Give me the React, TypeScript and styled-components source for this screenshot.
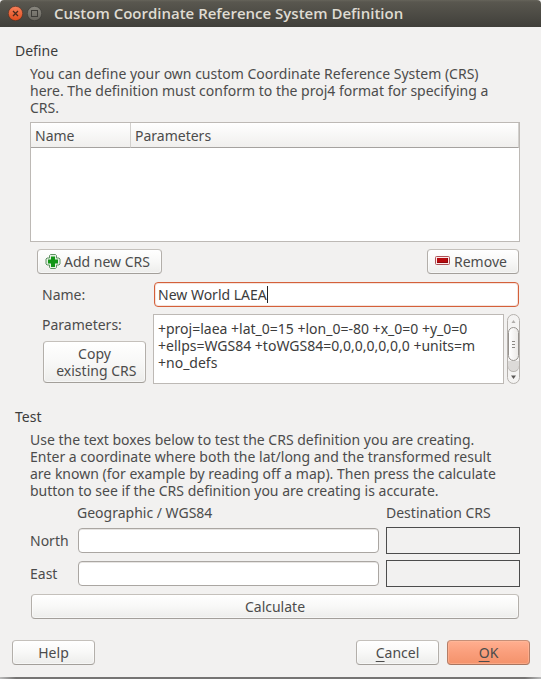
import React, { useState } from "react";
import styled, { createGlobalStyle, css } from "styled-components";

const GlobalStyle = createGlobalStyle`
  * { box-sizing: border-box; }
  body {
    margin: 0;
    background: #f2f1f0;
    color: #4c4c4c;
    font: 14px/17px "Noto Sans", "Open Sans", sans-serif;
  }
  button, input, textarea { font: inherit; color: inherit; }
`;

const Dialog = styled.form`
  display: flex;
  flex-direction: column;
  min-height: 100vh;
`;

const TitleBar = styled.header`
  display: flex;
  align-items: center;
  gap: 4px;
  height: 27px;
  padding: 0 8px;
  background: linear-gradient(#66645a 0, #59574f 2px, #403f3a 100%);
  border-radius: 4px 4px 0 0;
`;

const Title = styled.h1`
  margin: 0 0 0 8px;
  color: #dfdbd2;
  font-family: "Open Sans", "Noto Sans", sans-serif;
  font-size: 15px;
  font-weight: 600;
  line-height: 17px;
  white-space: nowrap;
`;

const WindowButton = styled.button`
  width: 15px;
  height: 15px;
  padding: 0;
  border: 0;
  background: none;
  line-height: 0;
`;

const Content = styled.main`
  flex: 1;
  padding: 15px 21px 0 15px;
`;

const Section = styled.section`
  & + & { margin-top: 24px; }
`;

const SectionTitle = styled.h2`
  margin: 0 0 6px;
  color: #3c3c3c;
  font-size: 14px;
  font-weight: 400;
  line-height: 17px;
`;

const SectionBody = styled.div`
  display: flex;
  flex-direction: column;
  gap: 6px;
  margin-left: 15px;
`;

const Description = styled.p`
  margin: 0;
  white-space: nowrap;
`;

const ListFrame = styled.div`
  height: 120px;
  border: 1px solid #bdb9b5;
  background: #fff;
`;

const CrsTable = styled.table`
  width: 100%;
  border-collapse: separate;
  border-spacing: 0;
  table-layout: fixed;
`;

const HeaderCell = styled.th<{ $width?: number }>`
  width: ${(p) => (p.$width ? `${p.$width}px` : "auto")};
  height: 25px;
  padding: 0 4px;
  border-right: 1px solid #d2d0cd;
  border-bottom: 1px solid #a5a29f;
  background: linear-gradient(#fff, #f0efed);
  font-weight: 400;
  text-align: left;
`;

const SpreadRow = styled.div<{ $indent?: number }>`
  display: flex;
  justify-content: space-between;
  padding-left: ${(p) => p.$indent ?? 0}px;
`;

const Button = styled.button<{ $primary?: boolean; $minWidth?: number }>`
  display: flex;
  align-items: center;
  justify-content: center;
  gap: 3px;
  min-width: ${(p) => p.$minWidth ?? 0}px;
  min-height: 25px;
  margin: 1px;
  padding: 3px 7px;
  border: 1px solid;
  border-color: #c4c0bb #b3afaa #a39f9a;
  border-radius: 4px;
  background: linear-gradient(#fff, #f8f8f7 50%, #ededeb);
  box-shadow: inset 0 0 0 1px rgba(255, 255, 255, 0.5);
  ${(p) =>
    p.$primary &&
    css`
      border-color: #c68f78 #b57d66 #a87560;
      background: linear-gradient(#ffaf90, #fa9e7b 50%, #f4926b);
      box-shadow: inset 0 0 0 1px rgba(255, 190, 160, 0.5);
    `}
`;

const IconButton = styled(Button)`
  justify-content: flex-start;
`;

const Mnemonic = styled.span`
  text-decoration: underline;
  text-decoration-skip-ink: none;
  text-underline-offset: 3px;
`;

const DefinitionGrid = styled.div`
  display: grid;
  grid-template-columns: 105px 1fr;
  gap: 6px;
  padding-left: 12px;
`;

const FieldLabel = styled.label`
  align-self: center;
`;

const SideColumn = styled.div`
  display: flex;
  flex-direction: column;
  justify-content: space-between;
  padding-top: 2px;
`;

const CopyButton = styled(Button)`
  min-height: 42px;
  line-height: 17px;
`;

const FocusedField = styled.div`
  display: flex;
  align-items: center;
  height: 25px;
  margin: 1px;
  padding-left: 3px;
  border: 1px solid #d4603a;
  border-radius: 4px;
  background: #fff;
  box-shadow: inset 0 0 0 1px #f6e3dc;
  color: #3c3c3c;
`;

const NameInput = styled.input`
  field-sizing: content;
  min-width: 1px;
  max-width: 100%;
  padding: 0;
  border: 0;
  outline: 0;
  background: none;
  caret-color: transparent;
`;

const Caret = styled.span`
  width: 1px;
  height: 17px;
  background: #222;
`;

const ParameterArea = styled.div`
  display: flex;
  gap: 3px;
  height: 70px;
`;

const ParameterText = styled.textarea`
  flex: 1;
  min-width: 0;
  padding: 5px 4px;
  border: 1px solid #bdb9b5;
  outline: 0;
  background: #fff;
  color: #3c3c3c;
  overflow: hidden;
  resize: none;
  white-space: pre;
`;

const ScrollTrack = styled.div`
  display: flex;
  flex-direction: column;
  width: 13px;
  border: 1px solid #b5b1ad;
  border-radius: 7px;
  background: #f4f3f2;
  overflow: hidden;
`;

const ScrollStep = styled.button`
  height: 12px;
  padding: 0;
  border: 0;
  background: none;
  line-height: 0;
`;

const ScrollTrough = styled.div`
  flex: 1;
  border-radius: 0 0 6px 6px;
  background: #dcdad8;
  box-shadow: 0 1px 0 #b5b1ad;
`;

const ScrollThumb = styled.div`
  display: flex;
  flex-direction: column;
  align-items: center;
  justify-content: center;
  gap: 2px;
  height: 34px;
  border: 1px solid #96928e;
  border-radius: 6px;
  background: linear-gradient(90deg, #fff, #eceae8);
`;

const Grip = styled.span`
  width: 3px;
  height: 1px;
  background: #8b8884;
`;

const TestGrid = styled.div`
  display: grid;
  grid-template-columns: 41px 1fr 134px;
  gap: 6px;
  align-items: center;
`;

const ColumnLabel = styled.span<{ $first?: boolean }>`
  grid-column: ${(p) => (p.$first ? 2 : "auto")};
  line-height: 16px;
`;

const CoordinateInput = styled.input`
  min-width: 0;
  height: 25px;
  margin: 1px;
  padding: 0 4px;
  border: 1px solid #aaa6a2;
  border-radius: 4px;
  outline: 0;
  background: #fff;
  box-shadow: inset 0 1px 0 #e7e5e3;
`;

const ResultBox = styled.output`
  height: 27px;
  border: 1px solid #4c4c4c;
`;

const Footer = styled.footer`
  display: flex;
  justify-content: space-between;
  margin-top: 19px;
  padding: 0 10px 11px 11px;
`;

const FooterGroup = styled.div`
  display: flex;
  gap: 6px;
`;

const BottomEdge = styled.div`
  height: 2px;
  background: linear-gradient(90deg, #bbb, #757473 16px calc(100% - 16px), #bbb);
`;

const CloseIcon = () => (
  <svg width="15" height="15" viewBox="0 0 15 15">
    <defs>
      <linearGradient id="close" x2="0" y2="1">
        <stop stopColor="#f7815b" />
        <stop offset="1" stopColor="#de4b1c" />
      </linearGradient>
    </defs>
    <circle cx="7.5" cy="7.5" r="7.2" fill="url(#close)" stroke="#4b2d21" strokeWidth=".6" />
    <path d="M5 5l5 5M10 5L5 10" stroke="#4a2a1c" strokeWidth="1.3" />
  </svg>
);

const MaximizeIcon = () => (
  <svg width="15" height="15" viewBox="0 0 15 15">
    <defs>
      <linearGradient id="max" x2="0" y2="1">
        <stop stopColor="#8a8880" />
        <stop offset="1" stopColor="#66645d" />
      </linearGradient>
    </defs>
    <circle cx="7.5" cy="7.5" r="7.2" fill="url(#max)" stroke="#383733" strokeWidth=".6" />
    <rect x="4.5" y="4.5" width="6" height="6" fill="none" stroke="#3d3c38" />
  </svg>
);

const PlusIcon = () => (
  <svg width="16" height="16" viewBox="0 0 16 16">
    <path
      d="M5.500 0.500h5l1 1v2.500h2.500l1 1v5l-1 1h-2.500v2.500l-1 1h-5l-1-1v-2.500h-2.500l-1-1v-5l1-1h2.500v-2.500z"
      fill="#e4f1e3"
      stroke="#5f9262"
    />
    <path d="M6 2.500h4v3h3v4h-3v3.500H6v-3.500H3v-4h3z" fill="#119516" />
  </svg>
);

const MinusIcon = () => (
  <svg width="16" height="16" viewBox="0 0 16 16">
    <rect x="0.500" y="2.500" width="14" height="8" rx="1" fill="#fbeaea" stroke="#ae5358" />
    <rect x="2" y="4" width="11" height="5" fill="#b80a0e" />
    <path d="M2 8.500h11M12.500 4v5" stroke="#8e070a" />
  </svg>
);

const Arrow = ({ down = false }: { down?: boolean }) => (
  <svg width="11" height="12" viewBox="0 0 11 12">
    {down ? (
      <path d="M3 4.500h5L5.500 8z" fill="#5b5856" />
    ) : (
      <path d="M3.500 8h4l-2-3z" fill="#b0adaa" />
    )}
  </svg>
);

export default function App() {
  const [name, setName] = useState("New World LAEA");
  const [params, setParams] = useState(
    "+proj=laea +lat_0=15 +lon_0=-80 +x_0=0 +y_0=0\n+ellps=WGS84 +toWGS84=0,0,0,0,0,0,0 +units=m\n+no_defs"
  );

  return (
    <>
      <GlobalStyle />
      <Dialog onSubmit={(e) => e.preventDefault()}>
        <TitleBar>
          <WindowButton type="button" aria-label="Close"><CloseIcon /></WindowButton>
          <WindowButton type="button" aria-label="Maximize"><MaximizeIcon /></WindowButton>
          <Title>Custom Coordinate Reference System Definition</Title>
        </TitleBar>
        <Content>
          <Section>
            <SectionTitle>Define</SectionTitle>
            <SectionBody>
              <Description>
                You can define your own custom Coordinate Reference System (CRS)<br />
                here. The definition must conform to the proj4 format for specifying a<br />
                CRS.
              </Description>
              <ListFrame>
                <CrsTable>
                  <thead>
                    <tr>
                      <HeaderCell $width={100}>Name</HeaderCell>
                      <HeaderCell>Parameters</HeaderCell>
                    </tr>
                  </thead>
                </CrsTable>
              </ListFrame>
              <SpreadRow $indent={6}>
                <IconButton type="button" $minWidth={125}><PlusIcon />Add new CRS</IconButton>
                <IconButton type="button" $minWidth={92}><MinusIcon />Remove</IconButton>
              </SpreadRow>
              <DefinitionGrid>
                <FieldLabel htmlFor="crs-name">Name:</FieldLabel>
                <FocusedField>
                  <NameInput id="crs-name" value={name} onChange={(e) => setName(e.target.value)} />
                  <Caret />
                </FocusedField>
                <SideColumn>
                  <label htmlFor="crs-params">Parameters:</label>
                  <CopyButton type="button">
                    <span>Copy<br />&nbsp;existing CRS</span>
                  </CopyButton>
                </SideColumn>
                <ParameterArea>
                  <ParameterText
                    id="crs-params"
                    spellCheck={false}
                    value={params}
                    onChange={(e) => setParams(e.target.value)}
                  />
                  <ScrollTrack>
                    <ScrollStep type="button" aria-label="Scroll up"><Arrow /></ScrollStep>
                    <ScrollThumb><Grip /><Grip /><Grip /></ScrollThumb>
                    <ScrollTrough />
                    <ScrollStep type="button" aria-label="Scroll down"><Arrow down /></ScrollStep>
                  </ScrollTrack>
                </ParameterArea>
              </DefinitionGrid>
            </SectionBody>
          </Section>
          <Section>
            <SectionTitle>Test</SectionTitle>
            <SectionBody>
              <Description>
                Use the text boxes below to test the CRS definition you are creating.<br />
                Enter a coordinate where both the lat/long and the transformed result<br />
                are known (for example by reading off a map). Then press the calculate<br />
                button to see if the CRS definition you are creating is accurate.
              </Description>
              <TestGrid>
                <ColumnLabel $first>Geographic / WGS84</ColumnLabel>
                <ColumnLabel>Destination CRS</ColumnLabel>
                <label htmlFor="north">North</label>
                <CoordinateInput id="north" />
                <ResultBox htmlFor="north" aria-label="Destination north" />
                <label htmlFor="east">East</label>
                <CoordinateInput id="east" />
                <ResultBox htmlFor="east" aria-label="Destination east" />
              </TestGrid>
              <Button type="button">Calculate</Button>
            </SectionBody>
          </Section>
        </Content>
        <Footer>
          <Button type="button" $minWidth={83}>Help</Button>
          <FooterGroup>
            <Button type="button" $minWidth={83}><span><Mnemonic>C</Mnemonic>ancel</span></Button>
            <Button type="submit" $primary $minWidth={83}><span><Mnemonic>O</Mnemonic>K</span></Button>
          </FooterGroup>
        </Footer>
        <BottomEdge />
      </Dialog>
    </>
  );
}
